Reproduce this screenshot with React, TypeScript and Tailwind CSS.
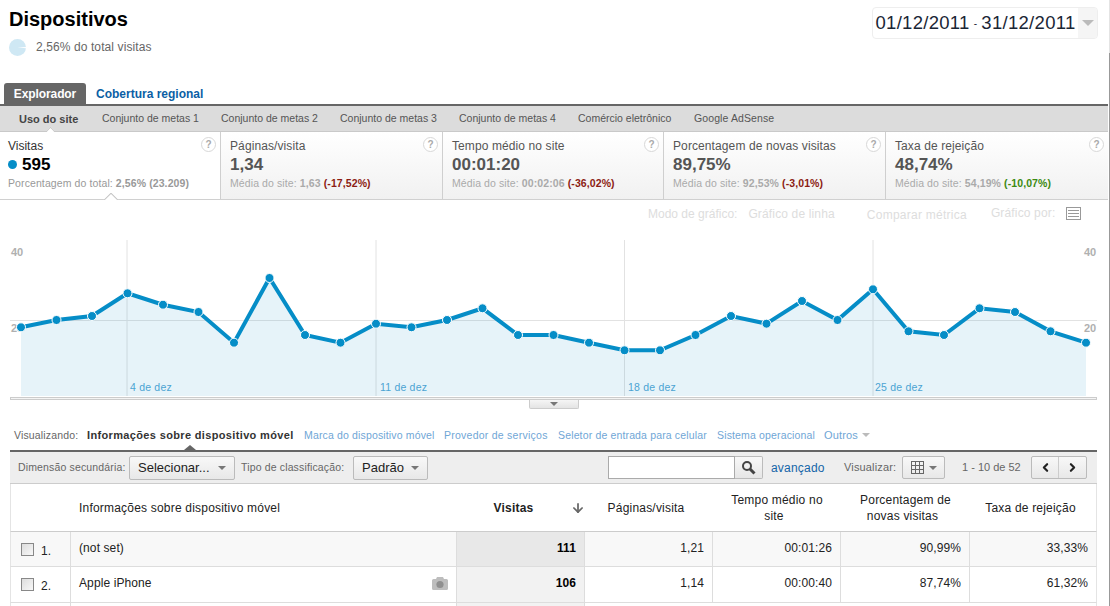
import { ArrowDown, ChevronLeft, ChevronRight } from "lucide-react";

const points = [
  327.3, 320, 316, 293.3, 304.7, 312, 342.7, 278, 335, 342.7, 323.7, 327.3, 320, 308.3, 335, 335,
  342.7, 350.3, 350.3, 335, 316, 323.7, 301, 320, 289.3, 331.3, 335, 308.3, 312, 331.3, 342.7,
];
const coords = points.map((y, i) => [21 + i * 35.5, y]);
const linePath = coords.map(([x, y]) => `${x},${y}`).join(" ");
const areaPath = `21,396 ${linePath} 1086,396`;

const metrics = [
  { title: "Páginas/visita", value: "1,34", label: "Média do site:", avg: "1,63", diff: "(-17,52%)", color: "text-[#8c1c13]", w: "w-[222px]" },
  { title: "Tempo médio no site", value: "00:01:20", label: "Média do site:", avg: "00:02:06", diff: "(-36,02%)", color: "text-[#8c1c13]", w: "w-[221px]" },
  { title: "Porcentagem de novas visitas", value: "89,75%", label: "Média do site:", avg: "92,53%", diff: "(-3,01%)", color: "text-[#8c1c13]", w: "w-[222px]" },
  { title: "Taxa de rejeição", value: "48,74%", label: "Média do site:", avg: "54,19%", diff: "(-10,07%)", color: "text-[#3c8a10]", w: "flex-1" },
];

const rows = [
  { n: "1.", name: "(not set)", visits: "111", pages: "1,21", time: "00:01:26", fresh: "90,99%", bounce: "33,33%", bg: "bg-[#f8f8f8]", sort: "bg-[#e8e8e8]", h: "h-[35px]", camera: false },
  { n: "2.", name: "Apple iPhone", visits: "106", pages: "1,14", time: "00:00:40", fresh: "87,74%", bounce: "61,32%", bg: "bg-white", sort: "bg-[#f2f2f2]", h: "h-[36px]", camera: true },
];

const Help = () => (
  <span className="absolute right-[4px] top-[5px] flex h-[15px] w-[15px] items-center justify-center rounded-full border border-[#d8d8d8] bg-white text-[10px] font-bold leading-none text-[#aaa]">
    ?
  </span>
);

const Caret = ({ className = "" }: { className?: string }) => (
  <span className={`inline-block h-0 w-0 border-x-[4px] border-t-[4px] border-x-transparent border-t-[#777] ${className}`} />
);

const GridIcon = () => (
  <svg width="13" height="13" viewBox="0 0 13 13" fill="none" stroke="#666" strokeWidth="1" shapeRendering="crispEdges">
    <path d="M.5.5h12v12H.5zM4.5.5v12M8.5.5v12M.5 4.5h12M.5 8.5h12" />
  </svg>
);

const SearchIcon = () => (
  <svg width="15" height="15" viewBox="0 0 15 15" fill="none" stroke="#444">
    <circle cx="6" cy="6" r="4" strokeWidth="2" />
    <path d="M9 9l4.500 4.500" strokeWidth="3" />
  </svg>
);

const CameraIcon = () => (
  <svg width="16" height="13" viewBox="0 0 16 13">
    <path d="M1.500 2H4l1-2h6l1 2h2.500A1.500 1.500 0 0 1 16 3.500v8a1.500 1.500 0 0 1-1.500 1.500h-13A1.500 1.500 0 0 1 0 11.500v-8A1.500 1.500 0 0 1 1.500 2z" fill="#bdbdbd" />
    <circle cx="8" cy="7.500" r="3.600" fill="#8f8f8f" />
  </svg>
);

const App = () => {
  return (
    <div className="relative h-[606px] w-[1110px] overflow-hidden bg-white font-['Liberation_Sans',Arial,sans-serif]">
      {/* page edge */}
      <div className="absolute right-0 top-0 h-[53px] w-px bg-[#e4e4e4]" />
      <div className="absolute bottom-0 right-0 top-[53px] w-px bg-[#999]" />

      {/* header */}
      <div className="flex h-[83px] justify-between pr-[12px]">
        <div className="pl-[9px]">
          <h1 className="pt-[8px] text-[20px] font-bold leading-[23px] text-black">Dispositivos</h1>
          <div className="mt-[7px] flex items-center gap-[10px]">
            <svg width="17" height="17" viewBox="0 0 17 17">
              <circle cx="8.500" cy="8.500" r="8.500" fill="#cfe8f4" />
              <path d="M8.500 8.500L17 8l0 1.300z" fill="#fff" />
            </svg>
            <span className="text-[12px] tracking-[0.1px] text-[#666]">2,56% do total visitas</span>
          </div>
        </div>
        <div className="mt-[7px] flex h-[32px] w-[226px] overflow-hidden rounded-[4px] border border-[#eeeeee]">
          <div className="flex flex-1 items-center justify-center whitespace-nowrap text-[18.500px] tracking-[0.3px] text-[#1a2635]">
            01/12/2011<span className="mx-[4px] text-[10px]">-</span>31/12/2011
          </div>
          <div className="flex w-[19px] items-center justify-center bg-[#f5f5f5]">
            <span className="inline-block h-0 w-0 border-x-[6px] border-t-[6px] border-x-transparent border-t-[#bbb]" />
          </div>
        </div>
      </div>

      {/* tabs */}
      <div className="flex h-[21px] items-stretch pl-[4px]">
        <div className="flex w-[82px] items-center justify-center rounded-t-[3px] bg-[#666] text-[12px] font-bold tracking-[-0.1px] text-white">Explorador</div>
        <div className="flex items-center pl-[10px] text-[12px] font-bold text-[#0b5fa5]">Cobertura regional</div>
      </div>
      <div className="mr-[2px]">
        <div className="h-[2px] bg-[#666]" />
        <div className="relative flex h-[26px] items-center border-b border-[#c9c9c9] bg-[#dcdcdc] pt-[1px] text-[10.500px] text-[#555]">
          <span className="ml-[19px] w-[83px] text-[11px] font-bold text-[#444]">Uso do site</span>
          <span className="w-[119px]">Conjunto de metas 1</span>
          <span className="w-[119px]">Conjunto de metas 2</span>
          <span className="w-[119px]">Conjunto de metas 3</span>
          <span className="w-[119px]">Conjunto de metas 4</span>
          <span className="w-[116px]">Comércio eletrônico</span>
          <span className="tracking-[0.1px]">Google AdSense</span>
          <span className="absolute bottom-[-1px] left-[46px] h-[6px] w-[9px] overflow-hidden">
            <span className="absolute left-[1px] top-[2px] block h-[7px] w-[7px] rotate-45 border border-[#c9c9c9] bg-white" />
          </span>
        </div>

        {/* metric cards */}
        <div className="flex h-[68px] border-b border-[#d0d0d0]">
          <div className="relative w-[221px] border-r border-[#cfcfcf] bg-white pl-[8px]">
            <Help />
            <div className="pt-[7px] text-[12px] leading-[15px] text-[#333]">Visitas</div>
            <div className="mt-[1px] flex items-center gap-[5px] text-[17px] font-bold leading-[19px] text-black">
              <span className="h-[9px] w-[9px] rounded-full bg-[#058dc7]" />
              595
            </div>
            <div className="mt-[1px] whitespace-nowrap text-[10.500px] leading-[17px] tracking-[0.1px] text-[#999]">
              Porcentagem do total: <span className="font-bold text-[#999]">2,56% (23.209)</span>
            </div>
            <span className="absolute bottom-[-1px] left-[102px] h-[7px] w-[18px] overflow-hidden">
              <span className="absolute left-[3px] top-[2px] block h-[12px] w-[12px] rotate-45 border border-[#c4c4c4] bg-white" />
            </span>
          </div>
          {metrics.map((m, i) => (
            <div
              key={m.title}
              className={`relative ${m.w} ${i < 3 ? "border-r border-[#cfcfcf]" : ""} bg-gradient-to-b from-white to-[#f1f1f1] pl-[9px]`}>
              <Help />
              <div className="pt-[7px] whitespace-nowrap text-[12px] leading-[15px] tracking-[0.1px] text-[#555]">{m.title}</div>
              <div className="mt-[1px] text-[17px] font-bold leading-[19px] text-[#555]">{m.value}</div>
              <div className="mt-[1px] whitespace-nowrap text-[10.500px] leading-[17px] tracking-[0.1px] text-[#aaa]">
                {m.label} <span className="font-bold text-[#aaa]">{m.avg}</span>{" "}
                <span className={`font-bold ${m.color}`}>{m.diff}</span>
              </div>
            </div>
          ))}
        </div>
      </div>

      {/* chart options */}
      <div className="relative flex h-[40px] items-start whitespace-nowrap text-[12px] tracking-[0.15px] text-[#dddddd]">
        <span className="ml-[648px] mt-[5px] tracking-normal">Modo de gráfico:</span>
        <span className="ml-[11px] mt-[5px]">Gráfico de linha</span>
        <span className="ml-[32px] mt-[6px] tracking-[0.25px]">Comparar métrica</span>
        <span className="ml-[24px] mt-[4px]">Gráfico por:</span>
        <svg className="ml-[11px] mt-[7px]" width="15" height="13" viewBox="0 0 15 13" fill="none" stroke="#999" shapeRendering="crispEdges">
          <path d="M.5.5h14v12H.5zM2 3.500h11M2 6.500h11M2 9.500h11" />
        </svg>
      </div>

      {/* line chart */}
      <div className="ml-[10px] w-[1087px]">
        <svg width="1087" height="157" viewBox="10 240 1087 157" className="block">
          {[127, 376, 624.5, 873].map((x) => (
            <line key={x} x1={x} x2={x} y1="240" y2="396" stroke="#e2e2e2" />
          ))}
          <line x1="10" x2="1097" y1="320.500" y2="320.500" stroke="#e2e2e2" />
          <polygon points={areaPath} fill="#058dc7" fillOpacity="0.1" />
          <text x="11" y="256" fontSize="11" fontWeight="700" fill="#b0b0b0">40</text>
          <text x="11" y="332" fontSize="11" fontWeight="700" fill="#b0b0b0">20</text>
          <text x="1084" y="256" fontSize="11" fontWeight="700" fill="#b0b0b0">40</text>
          <text x="1084" y="332" fontSize="11" fontWeight="700" fill="#b0b0b0">20</text>
          {["4 de dez", "11 de dez", "18 de dez", "25 de dez"].map((d, i) => (
            <text key={d} x={[130, 380, 628, 875][i]} y="391" fontSize="10.500" letterSpacing="0.2" fill="#4ba3d3">{d}</text>
          ))}
          <polyline points={linePath} fill="none" stroke="#058dc7" strokeWidth="4" />
          {coords.map(([x, y]) => (
            <circle key={x} cx={x} cy={y} r="4.500" fill="#058dc7" stroke="#fff" strokeWidth="1" />
          ))}
        </svg>
        <div className="h-[3px] border border-[#cccccc] bg-[#f4f4f4]" />
        <div className="ml-[519px] flex h-[9px] w-[50px] items-center justify-center rounded-b-[2px] border border-t-0 border-[#cccccc] bg-gradient-to-b from-[#f5f5f5] to-[#e4e4e4]">
          <Caret />
        </div>
      </div>

      {/* table tabs */}
      <div className="relative mt-[19px] flex h-[22px] items-start whitespace-nowrap pl-[14px] text-[10.500px] leading-[14px] tracking-[0.15px]">
        <span className="w-[73px] text-[#666]">Visualizando:</span>
        <span className="w-[217px] text-[11px] font-bold tracking-[0.35px] text-[#333]">Informações sobre dispositivo móvel</span>
        <span className="w-[140px] text-[#6fa6d6]">Marca do dispositivo móvel</span>
        <span className="w-[114px] tracking-[0.25px] text-[#6fa6d6]">Provedor de serviços</span>
        <span className="w-[159px] text-[#6fa6d6]">Seletor de entrada para celular</span>
        <span className="w-[107px] text-[#6fa6d6]">Sistema operacional</span>
        <span className="flex items-center gap-[4px] text-[11px] text-[#6fa6d6]">
          Outros
          <span className="inline-block h-0 w-0 border-x-[4px] border-t-[4px] border-x-transparent border-t-[#bbb]" />
        </span>
        <span className="absolute bottom-0 left-[184px] h-0 w-0 border-x-[6px] border-b-[5px] border-x-transparent border-b-[#666]" />
      </div>

      {/* table */}
      <div className="ml-[10px] w-[1087px] border-t-2 border-[#666]">
        {/* toolbar */}
        <div className="flex h-[32px] items-center whitespace-nowrap border-b border-[#cccccc] bg-[#eeeeee] text-[10.500px] tracking-[0.15px] text-[#666]">
          <span className="ml-[8px] w-[111px]">Dimensão secundária:</span>
          <div className="flex h-[24px] w-[106px] items-center justify-between rounded-[2px] border border-[#bbb] bg-gradient-to-b from-[#f8f8f8] to-[#e8e8e8] pl-[8px] pr-[8px] text-[13px] tracking-normal text-[#222]">
            Selecionar...
            <Caret />
          </div>
          <span className="ml-[6px] w-[112px]">Tipo de classificação:</span>
          <div className="flex h-[24px] w-[75px] items-center justify-between rounded-[2px] border border-[#bbb] bg-gradient-to-b from-[#f8f8f8] to-[#e8e8e8] pl-[8px] pr-[8px] text-[13px] tracking-normal text-[#222]">
            Padrão
            <Caret />
          </div>
          <input className="ml-[180px] h-[23px] w-[127px] border border-[#aaa] bg-white" />
          <div className="flex h-[23px] w-[28px] items-center justify-center rounded-r-[2px] border border-l-0 border-[#bbb] bg-gradient-to-b from-[#f8f8f8] to-[#e6e6e6]">
            <SearchIcon />
          </div>
          <span className="ml-[8px] w-[73px] text-[12px] tracking-[0.2px] text-[#1565a8]">avançado</span>
          <span className="w-[58px] text-[11px]">Visualizar:</span>
          <div className="flex h-[23px] w-[43px] items-center justify-between rounded-[2px] border border-[#bbb] bg-gradient-to-b from-[#f8f8f8] to-[#e8e8e8] pl-[8px] pr-[7px]">
            <GridIcon />
            <Caret />
          </div>
          <span className="ml-[17px] w-[69px] text-[11px] tracking-normal">1 - 10 de 52</span>
          <div className="flex h-[23px] w-[56px] rounded-[2px] border border-[#bbb] bg-gradient-to-b from-[#f8f8f8] to-[#e8e8e8]">
            <div className="flex w-[27px] items-center justify-center border-r border-[#ccc]">
              <ChevronLeft size={13} strokeWidth={4} color="#222" />
            </div>
            <div className="flex flex-1 items-center justify-center">
              <ChevronRight size={13} strokeWidth={4} color="#222" />
            </div>
          </div>
        </div>

        {/* table head */}
        <div className="flex h-[48px] items-center border-b border-[#cccccc] border-x border-x-[#e4e4e4] text-center text-[12px] leading-[16px] tracking-[0.2px] text-[#222]">
          <div className="w-[445px] pl-[68px] text-left">Informações sobre dispositivo móvel</div>
          <div className="relative w-[129px] pr-[14px] font-bold">
            Visitas
            <ArrowDown size={14} strokeWidth={3} color="#666" className="absolute right-0 top-[1px]" />
          </div>
          <div className="w-[128px] pr-[6px]">Páginas/visita</div>
          <div className="w-[128px]">
            Tempo médio no
            <br />
            <span className="inline-block pr-[6px]">site</span>
          </div>
          <div className="w-[129px]">
            Porcentagem de
            <br />
            <span className="inline-block pr-[6px]">novas visitas</span>
          </div>
          <div className="flex-1 pr-[5px]">Taxa de rejeição</div>
        </div>

        {/* rows */}
        {rows.map((r) => (
          <div key={r.n} className={`flex ${r.h} border-b border-[#dddddd] border-x border-x-[#e4e4e4] text-[12px] tracking-[0.1px] text-[#222] ${r.bg}`}>
            <div className="flex w-[60px] items-center border-r border-[#dddddd] pl-[10px]">
              <span className="h-[13px] w-[13px] border border-[#888] bg-gradient-to-br from-[#ddd] to-[#f8f8f8]" />
              <span className="ml-[7px] mt-[3px]">{r.n}</span>
            </div>
            <div className="flex w-[385px] items-center justify-between pb-[3px] pl-[8px] pr-[8px]">
              {r.name}
              {r.camera && <CameraIcon />}
            </div>
            <div className={`flex w-[129px] items-center justify-end border-x border-[#dddddd] pb-[3px] pr-[8px] font-bold text-black ${r.sort}`}>{r.visits}</div>
            <div className="flex w-[128px] items-center justify-end border-r border-[#dddddd] pb-[3px] pr-[8px]">{r.pages}</div>
            <div className="flex w-[128px] items-center justify-end border-r border-[#dddddd] pb-[3px] pr-[8px]">{r.time}</div>
            <div className="flex w-[129px] items-center justify-end border-r border-[#dddddd] pb-[3px] pr-[8px]">{r.fresh}</div>
            <div className="flex flex-1 items-center justify-end pb-[3px] pr-[8px]">{r.bounce}</div>
          </div>
        ))}
        <div className="flex h-[10px] border-x border-[#e4e4e4]">
          <div className="w-[60px] border-r border-[#dddddd]" />
          <div className="w-[385px]" />
          <div className="w-[129px] border-x border-[#dddddd] bg-[#f2f2f2]" />
        </div>
      </div>
    </div>
  );
};

export default App;
